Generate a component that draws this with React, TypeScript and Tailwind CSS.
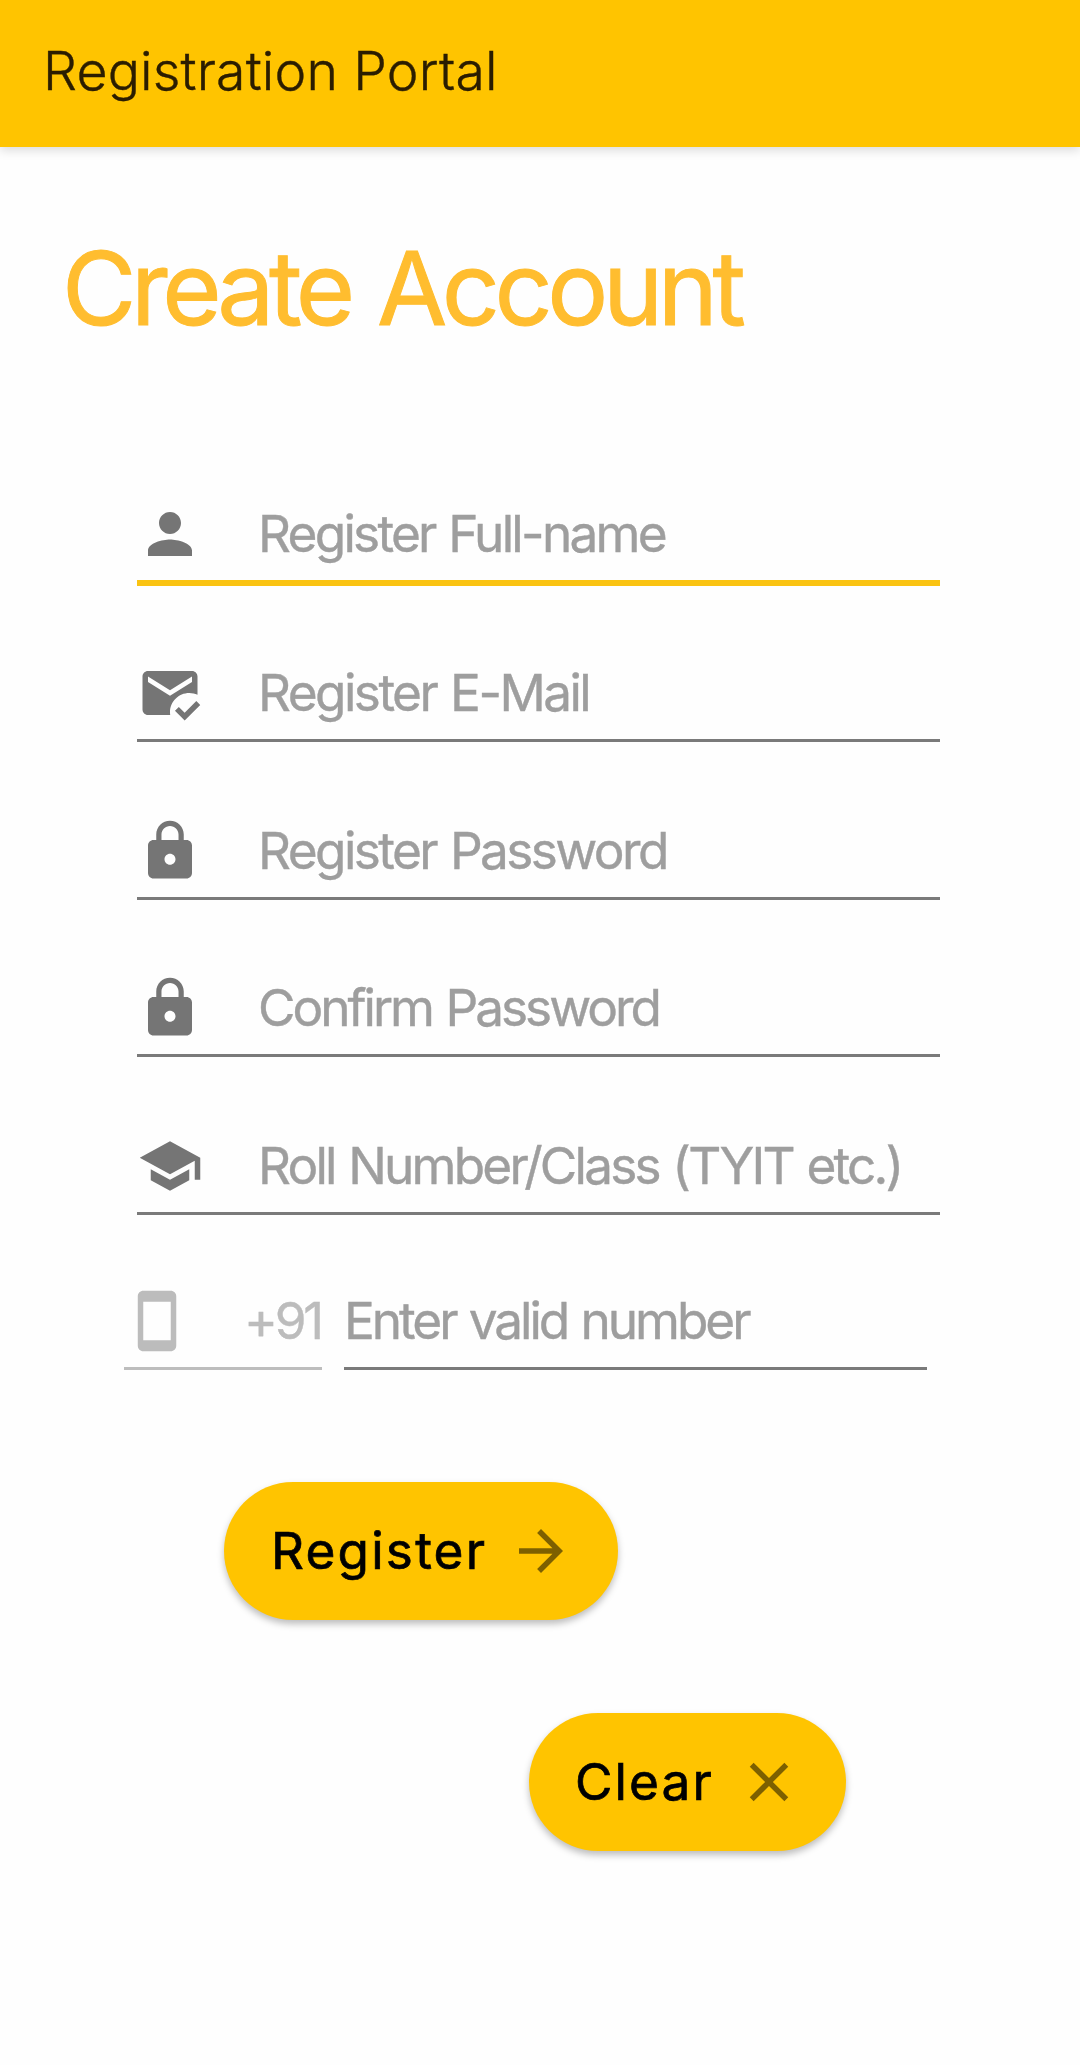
import type { ReactNode } from "react";

const PATHS = {
  person:
    "M12 12c2.21 0 4-1.79 4-4s-1.79-4-4-4-4 1.79-4 4 1.79 4 4 4zm0 2c-2.67 0-8 1.34-8 4v2h16v-2c0-2.66-5.33-4-8-4z",
  mail:
    "M12 19c0-3.87 3.13-7 7-7 1.08 0 2.09.25 3 .68V6c0-1.1-.9-2-2-2H4c-1.1 0-2 .9-2 2v12c0 1.1.9 2 2 2h8.08c-.06-.33-.08-.66-.08-1zM4 6l8 5 8-5v2l-8 5-8-5V6zm13.34 16l-3.54-3.54 1.41-1.41 2.12 2.12 4.24-4.24L23 16.34 17.34 22z",
  lock:
    "M18 8h-1V6c0-2.76-2.24-5-5-5S7 3.24 7 6v2H6c-1.1 0-2 .9-2 2v10c0 1.1.9 2 2 2h12c1.1 0 2-.9 2-2V10c0-1.1-.9-2-2-2zm-6 9c-1.1 0-2-.9-2-2s.9-2 2-2 2 .9 2 2-.9 2-2 2zm3.1-9H8.9V6c0-1.71 1.39-3.1 3.1-3.1 1.71 0 3.1 1.39 3.1 3.1v2z",
  school: "M5 13.18v4L12 21l7-3.82v-4L12 17l-7-3.82zM12 3L1 9l11 6 9-4.91V17h2V9L12 3z",
  phone:
    "M17 1.01L7 1c-1.1 0-1.99.9-1.99 2v18c0 1.1.89 2 1.99 2h10c1.1 0 2-.9 2-2V3c0-1.1-.9-1.99-2-1.99zM17 19H7V5h10v14z",
  arrow: "M12 4l-1.41 1.41L16.17 11H4v2h12.17l-5.58 5.59L12 20l8-8z",
  close:
    "M19 6.41L17.59 5 12 10.59 6.41 5 5 6.41 10.59 12 5 17.59 6.41 19 12 13.41 17.59 19 19 17.59 13.41 12z",
};

function Icon({ name, className }: { name: keyof typeof PATHS; className: string }) {
  return (
    <svg viewBox="0 0 24 24" fill="currentColor" className={`size-[66px] shrink-0 ${className}`}>
      <path d={PATHS[name]} />
    </svg>
  );
}

function Field({
  icon,
  label,
  tracking,
  focused = false,
}: {
  icon: keyof typeof PATHS;
  label: string;
  tracking: string;
  focused?: boolean;
}) {
  return (
    <label
      className={`flex w-[803px] items-start ${
        focused ? "h-[85px] border-b-[6px] border-[#fac312]" : "h-[82px] border-b-[3px] border-[#7a7a7a]"
      }`}
    >
      <Icon name={icon} className="text-[#757575]" />
      <span
        className={`ml-[55px] text-[51.3px] leading-[64px] whitespace-nowrap text-[#9e9e9e] [-webkit-text-stroke:0.4px_#9e9e9e] [word-spacing:2px] ${tracking}`}
      >
        {label}
      </span>
    </label>
  );
}

function PillButton({ className, children }: { className: string; children: ReactNode }) {
  return (
    <button
      className={`flex h-[138px] items-center rounded-full bg-[#ffc400] text-[51.3px] leading-[66px] text-black shadow-[0_4px_7px_rgba(0,0,0,0.26)] ${className}`}
    >
      {children}
    </button>
  );
}

export default function App() {
  return (
    <div className="h-[2065px] w-[1080px] overflow-hidden bg-[#fefefe] font-['Inter','Liberation_Sans',sans-serif]">
      <header className="flex h-[147px] items-center bg-[#ffc400] pb-[5px] pl-[43px] shadow-[0_3px_10px_rgba(0,0,0,0.15)]">
        <span className="text-[53.6px] font-light tracking-[0.15px] whitespace-nowrap text-[#2b1d00] [-webkit-text-stroke:0.4px_#2b1d00]">
          Registration Portal
        </span>
      </header>
      <main>
        <h1 className="mt-[81px] ml-[62px] text-[101.8px] leading-[120px] tracking-[-5.4px] whitespace-nowrap text-[#ffbd2f] [-webkit-text-stroke:1px_#ffbd2f] [word-spacing:4px]">
          Create Account
        </h1>
        <form className="mt-[153px] ml-[137px] flex flex-col">
          <Field icon="person" label="Register Full-name" tracking="tracking-[-2.75px]" focused />
          <div className="mt-[74px] flex flex-col gap-[75.5px]">
            <Field icon="mail" label="Register E-Mail" tracking="tracking-[-2.55px]" />
            <Field icon="lock" label="Register Password" tracking="tracking-[-2.57px]" />
            <Field icon="lock" label="Confirm Password" tracking="tracking-[-3px]" />
            <Field icon="school" label="Roll Number/Class (TYIT etc.)" tracking="tracking-[-2.81px]" />
          </div>
          <div className="mt-[73px] -ml-[13px] flex gap-[22px]">
            <div className="flex h-[82px] w-[198px] items-start border-b-[3px] border-[#bdbdbd]">
              <Icon name="phone" className="text-[#bcbcbc]" />
              <span className="ml-[54px] text-[51.3px] leading-[64px] tracking-[-3.2px] text-[#bcbcbc] [-webkit-text-stroke:0.4px_#bcbcbc]">
                +91
              </span>
            </div>
            <label className="h-[82px] w-[583px] border-b-[3px] border-[#7a7a7a] text-[51.3px] leading-[64px] tracking-[-3.05px] whitespace-nowrap text-[#9e9e9e] [-webkit-text-stroke:0.4px_#9e9e9e] [word-spacing:2px]">
              Enter valid number
            </label>
          </div>
        </form>
        <div className="mt-[112px] ml-[224px] flex w-[622px] flex-col gap-[93px]">
          <PillButton className="w-[394px] self-start pl-[47px]">
            <span className="w-[237px] pb-[2px] text-left tracking-[2.2px] [-webkit-text-stroke:0.7px_black]">
              Register
            </span>
            <Icon name="arrow" className="text-[#7d6000]" />
          </PillButton>
          <PillButton className="w-[317px] self-end pl-[46px]">
            <span className="w-[161px] pb-[2px] text-left tracking-[2.1px] [-webkit-text-stroke:0.7px_black]">
              Clear
            </span>
            <Icon name="close" className="text-[#7d6000]" />
          </PillButton>
        </div>
      </main>
    </div>
  );
}
